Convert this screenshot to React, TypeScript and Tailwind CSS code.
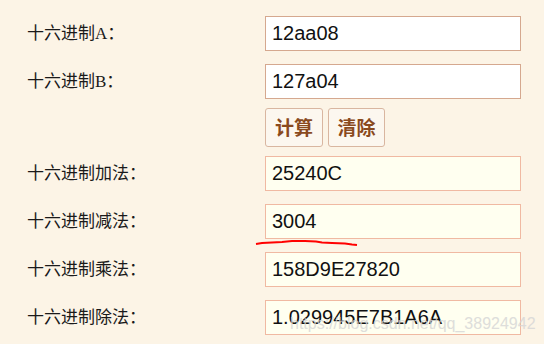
import React from "react";

const labelFont = { fontFamily: '"Liberation Serif", "Noto Sans CJK SC", serif' };
const inputFont = { fontFamily: '"Liberation Sans", Arial, sans-serif' };

function Row({ label, value, out }: { label: string; value: string; out?: boolean }) {
  return (
    <div className="flex items-center h-[35px]">
      <div className="w-[265px] pl-[27px] text-[17px] text-[#1a1a1a]" style={labelFont}>
        {label}
      </div>
      <input
        readOnly
        value={value}
        className={
          out
            ? "w-[256px] h-[35px] border border-[#f0b9a2] bg-[#fffff0] px-[6px] text-[20px] text-[#111] outline-none"
            : "w-[256px] h-[35px] border border-[#d5a88f] bg-white px-[6px] text-[20px] text-[#111] outline-none"
        }
        style={inputFont}
      />
    </div>
  );
}

export default function App() {
  return (
    <div className="relative w-[544px] h-[344px] bg-[#fcf4e6] overflow-hidden">
      <div className="flex flex-col pt-[16px]">
        <Row label="十六进制A：" value="12aa08" />
        <div className="mt-[13px]">
          <Row label="十六进制B：" value="127a04" />
        </div>
        <div className="mt-[9px] flex pl-[265px] gap-[5px] h-[39px]">
          <button
            className="w-[58px] h-[39px] rounded-[3px] border border-[#d9b6a0] bg-[#fcf7ef] text-[19px] font-bold text-[#8a4a1e]"
            style={{ fontFamily: '"Noto Sans CJK SC", sans-serif' }}
          >
            计算
          </button>
          <button
            className="w-[57px] h-[39px] rounded-[3px] border border-[#d9b6a0] bg-[#fcf7ef] text-[19px] font-bold text-[#8a4a1e]"
            style={{ fontFamily: '"Noto Sans CJK SC", sans-serif' }}
          >
            清除
          </button>
        </div>
        <div className="mt-[9px]">
          <Row label="十六进制加法：" value="25240C" out />
        </div>
        <div className="mt-[13px]">
          <Row label="十六进制减法：" value="3004" out />
        </div>
        <div className="mt-[13px]">
          <Row label="十六进制乘法：" value="158D9E27820" out />
        </div>
        <div className="mt-[13px]">
          <Row label="十六进制除法：" value="1.029945E7B1A6A" out />
        </div>
      </div>
      <svg className="absolute left-0 top-0 pointer-events-none" width="544" height="344">
        <path
          d="M256 244 L262 243 L272 242.5 L282 242 L292 241 L305 241 L316 241.5 L322 242.5 L332 243 L345 243.5 L352 244.5 L357 245"
          stroke="#ff0000"
          strokeWidth="2"
          fill="none"
        />
      </svg>
      <div
        className="absolute left-[290px] top-[312px] text-[16px] text-[#d6d6d6] opacity-80 pointer-events-none whitespace-nowrap"
        style={inputFont}
      >
        https://blog.csdn.net/qq_38924942
      </div>
    </div>
  );
}
